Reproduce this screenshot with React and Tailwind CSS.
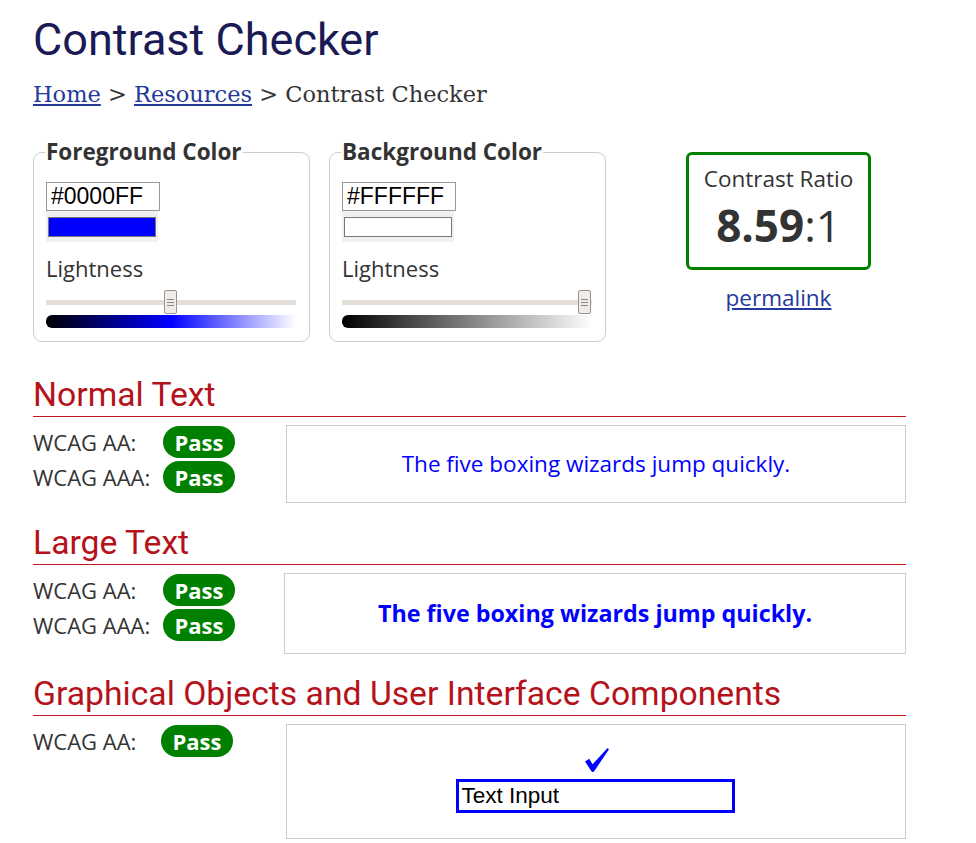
import React from "react";

const Thumb = ({ left }) => (
  <div
    className="absolute top-[-10px] w-[13px] h-[24px] bg-[#efece8] border border-[#9a968f] rounded-[2px] flex flex-col items-center justify-center gap-[2px]"
    style={{ left }}
  >
    <span className="block w-[7px] h-px bg-[#8a8680]" />
    <span className="block w-[7px] h-px bg-[#8a8680]" />
    <span className="block w-[7px] h-px bg-[#8a8680]" />
  </div>
);

const ColorBox = ({ title, hex, swatch, gradient, thumb }) => (
  <fieldset className="w-[277px] border border-[#cccccc] rounded-[9px] px-[12px] pt-0 pb-[13px] m-0 min-w-0">
    <legend className="px-[1px] ml-[-1px] font-['Open_Sans'] font-bold text-[22.5px] leading-[30px] text-[#333]">
      {title}
    </legend>
    <div className="mt-[15px] w-[114px] h-[29px] border border-[#999] flex items-center pl-[4px] font-['Liberation_Sans'] text-[23px] text-black">
      {hex}
    </div>
    <div className="w-[112px] h-[31px] bg-[#f0f0f0] pt-[6px] pb-[5px] px-[2px]">
      <div className="w-full h-full border border-[#777]" style={{ background: swatch }} />
    </div>
    <div className="mt-[11px] font-['Open_Sans'] text-[22px] leading-[30px] text-[#333]">Lightness</div>
    <div className="relative mt-[17px] h-[5px] w-[250px] bg-[#e3dfd8]">
      <Thumb left={thumb} />
    </div>
    <div className="mt-[10px] h-[13px] w-[250px] rounded-l-[6px]" style={{ background: gradient }} />
  </fieldset>
);

const Pass = () => (
  <span className="inline-flex items-center justify-center w-[72px] h-[32px] rounded-full bg-[#008000] text-white font-['Open_Sans'] font-bold text-[22px] leading-none">
    Pass
  </span>
);

const Row = ({ label, labelW = "w-[130px]" }) => (
  <div className="flex items-center h-[35px]">
    <span className={`${labelW} font-['Open_Sans'] text-[22px] leading-[30px] text-[#333]`}>{label}</span>
    <Pass />
  </div>
);

const Heading = ({ children }) => (
  <div>
    <h2 className="font-['Roboto'] text-[33.7px] leading-[38px] text-[#b5121b] pb-[2px]">{children}</h2>
    <div className="h-px bg-[#c0161e]" />
  </div>
);

// brush-style check mark above the sample input
const Check = () => (
  <svg width="24" height="24" viewBox="0 0 24 24" className="ml-[1px]">
    <path d="M0 13.5 L4.2 10.8 L7.6 16.2 L22.6 0 L24 1.2 L9 23.6 Q7.6 24.4 6.6 23.4 Z" fill="#0000ff" />
  </svg>
);

export default function App() {
  return (
    <div className="bg-white min-h-[843px] pl-[33px] w-[906px] font-['Open_Sans'] text-[#333]">
      <h1 className="pt-[14px] font-['Roboto'] text-[45px] leading-[52px] text-[#1a1a55]">Contrast Checker</h1>
      <nav className="mt-[15px] font-['DejaVu_Serif'] text-[22.5px] leading-[26px] text-[#333]">
        <a href="#" className="underline text-[#24399a]">Home</a>
        {" > "}
        <a href="#" className="underline text-[#24399a]">Resources</a>
        {" > Contrast Checker"}
      </nav>

      <div className="mt-[30px] flex items-start">
        <ColorBox
          title="Foreground Color"
          hex="#0000FF"
          swatch="#0000ff"
          gradient="linear-gradient(to right, #000 0%, #0000ff 50%, #ffffff 100%)"
          thumb="118px"
        />
        <div className="ml-[19px]">
          <ColorBox
            title="Background Color"
            hex="#FFFFFF"
            swatch="#ffffff"
            gradient="linear-gradient(to right, #000 0%, #ffffff 100%)"
            thumb="236px"
          />
        </div>
        <div className="ml-[80px] flex flex-col items-center">
          <div className="mt-[15px] w-[185px] h-[118px] border-[3px] border-[#008000] rounded-[6px] flex flex-col items-center pt-[10px]">
            <div className="text-[22.5px] leading-[28px] text-[#333]">Contrast Ratio</div>
            <div className="mt-[6px] text-[44px] leading-[52px] text-[#333]">
              <span className="font-bold">8.59</span>:1
            </div>
          </div>
          <a href="#" className="mt-[14px] text-[22.5px] leading-[28px] underline text-[#24399a]">permalink</a>
        </div>
      </div>

      <section className="mt-[34px]">
        <Heading>Normal Text</Heading>
        <div className="mt-[7px] flex items-start">
          <div className="w-[253px] flex flex-col">
            <Row label="WCAG AA:" />
            <Row label="WCAG AAA:" />
          </div>
          <div className="mt-[1px] flex-1 h-[78px] border border-[#cccccc] flex items-center justify-center">
            <span className="text-[22.5px] text-[#0000ff]">The five boxing wizards jump quickly.</span>
          </div>
        </div>
      </section>

      <section className="mt-[21px]">
        <Heading>Large Text</Heading>
        <div className="mt-[7px] flex items-start">
          <div className="w-[251px] flex flex-col">
            <Row label="WCAG AA:" />
            <Row label="WCAG AAA:" />
          </div>
          <div className="mt-[1px] flex-1 h-[81px] border border-[#cccccc] flex items-center justify-center">
            <span className="text-[23.3px] font-bold text-[#0000ff]">The five boxing wizards jump quickly.</span>
          </div>
        </div>
      </section>

      <section className="mt-[21px]">
        <Heading>Graphical Objects and User Interface Components</Heading>
        <div className="mt-[7px] flex items-start">
          <div className="w-[253px] flex flex-col">
            <Row label="WCAG AA:" labelW="w-[128px]" />
          </div>
          <div className="mt-[1px] flex-1 h-[115px] border border-[#cccccc] flex flex-col items-center pt-[23px]">
            <Check />
            <div className="mt-[7px] ml-[-2px] w-[279px] h-[34px] border-[3px] border-[#0000ff] flex items-center pl-[3px] font-['Liberation_Sans'] text-[22.5px] text-black">
              Text Input
            </div>
          </div>
        </div>
      </section>
    </div>
  );
}
